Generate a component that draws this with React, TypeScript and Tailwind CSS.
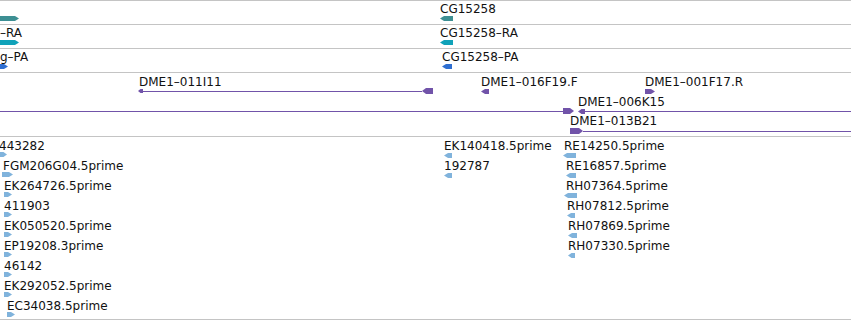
import React from "react";

type Dir = "l" | "r";

function ArrowShape({ w, h, dir, color, className = "" }: { w: number; h: number; dir: Dir; color: string; className?: string }) {
  const t = Math.min(4, w / 2);
  const pts =
    dir === "r"
      ? `0,0 ${w - t},0 ${w},${h / 2} ${w - t},${h} 0,${h}`
      : `${t},0 ${w},0 ${w},${h} ${t},${h} 0,${h / 2}`;
  return (
    <svg className={"block shrink-0 " + className} width={w} height={h} viewBox={`0 0 ${w} ${h}`}>
      <polygon points={pts} fill={color} />
    </svg>
  );
}

const PURPLE = "#7153a9";
const EST = "#80b3dc";
const label = "whitespace-nowrap text-[12px] leading-[14px] text-[#111]";

type Est = { t: string; lc: string; ac: string; w: number };

const leftEsts: Est[] = [
  { t: "443282", lc: "-ml-px", ac: "ml-0", w: 7 },
  { t: "FGM206G04.5prime", lc: "ml-[3px]", ac: "ml-[2px]", w: 11 },
  { t: "EK264726.5prime", lc: "ml-[4px]", ac: "ml-[4px]", w: 8 },
  { t: "411903", lc: "ml-[4px]", ac: "ml-[4px]", w: 8 },
  { t: "EK050520.5prime", lc: "ml-[4px]", ac: "ml-[4px]", w: 8 },
  { t: "EP19208.3prime", lc: "ml-[4px]", ac: "ml-[4px]", w: 8 },
  { t: "46142", lc: "ml-[4px]", ac: "ml-[4px]", w: 8 },
  { t: "EK292052.5prime", lc: "ml-[4px]", ac: "ml-[4px]", w: 8 },
  { t: "EC34038.5prime", lc: "ml-[7px]", ac: "ml-[7px]", w: 8 },
];

const midEsts: Est[] = [
  { t: "EK140418.5prime", lc: "ml-0", ac: "ml-0", w: 8 },
  { t: "192787", lc: "ml-0", ac: "ml-0", w: 8 },
];

const rightEsts: Est[] = [
  { t: "RE14250.5prime", lc: "ml-px", ac: "ml-0", w: 13 },
  { t: "RE16857.5prime", lc: "ml-[3px]", ac: "ml-[3px]", w: 10 },
  { t: "RH07364.5prime", lc: "ml-[3px]", ac: "ml-px", w: 13 },
  { t: "RH07812.5prime", lc: "ml-[4px]", ac: "ml-[4px]", w: 8 },
  { t: "RH07869.5prime", lc: "ml-[5px]", ac: "ml-[5px]", w: 9 },
  { t: "RH07330.5prime", lc: "ml-[5px]", ac: "ml-[5px]", w: 7 },
];

function EstColumn({ className, items, dir }: { className: string; items: Est[]; dir: Dir }) {
  return (
    <div className={"absolute top-0 flex flex-col " + className}>
      {items.map((e) => (
        <div key={e.t} className="flex h-[20px] flex-col items-start pt-[2px]">
          <div className={label + " " + e.lc}>{e.t}</div>
          <div className={e.ac + (dir === "r" ? " -mt-px" : "")}>
            <ArrowShape w={e.w} h={5} dir={dir} color={EST} />
          </div>
        </div>
      ))}
    </div>
  );
}

function Feature({ className, text, arrow }: { className: string; text?: string; arrow: React.ReactNode }) {
  return (
    <div className={"absolute flex flex-col items-start " + className}>
      {text && <div className={label}>{text}</div>}
      {arrow}
    </div>
  );
}

export default function App() {
  return (
    <div className="flex h-[320px] w-[851px] flex-col overflow-hidden bg-white font-['DejaVu_Sans','Liberation_Sans',sans-serif]">
      {/* gene rows */}
      <div className="relative h-[24px] shrink-0 border-t border-[#c4c4c4]">
        <Feature className="left-0 top-[15px]" arrow={<ArrowShape w={19} h={5} dir="r" color="#3d8f93" />} />
        <Feature
          className="left-[440px] top-px gap-0"
          text="CG15258"
          arrow={<ArrowShape w={13} h={5} dir="l" color="#3d8f93" />}
        />
      </div>
      <div className="relative h-[24px] shrink-0 border-t border-[#c4c4c4]">
        <Feature className="left-0 top-px" text="–RA" arrow={<ArrowShape w={19} h={5} dir="r" color="#10a2b9" />} />
        <Feature className="left-[440px] top-px" text="CG15258–RA" arrow={<ArrowShape w={13} h={5} dir="l" color="#10a2b9" />} />
      </div>
      <div className="relative h-[24px] shrink-0 border-t border-[#c4c4c4]">
        <Feature className="left-0 top-px" text="g–PA" arrow={<ArrowShape w={8} h={5} dir="r" color="#2f6fd1" />} />
        <Feature className="left-[442px] top-px" text="CG15258–PA" arrow={<ArrowShape w={10} h={5} dir="l" color="#2f6fd1" />} />
      </div>

      {/* clone track */}
      <div className="relative h-[64px] shrink-0 border-t border-[#c4c4c4]">
        <div className={"absolute left-[139px] top-[2px] " + label}>DME1–011I11</div>
        <div className="absolute left-[138px] top-[15px] flex w-[295px] items-center">
          <ArrowShape w={5} h={4} dir="l" color={PURPLE} />
          <div className="h-px flex-1 bg-[#7153a9]" />
          <ArrowShape w={11} h={6} dir="l" color={PURPLE} />
        </div>

        <Feature className="left-[481px] top-[2px] gap-[-1px]" text="DME1–016F19.F" arrow={<ArrowShape w={8} h={5} dir="l" color={PURPLE} />} />
        <Feature className="left-[645px] top-[2px]" text="DME1–001F17.R" arrow={<ArrowShape w={10} h={5} dir="r" color={PURPLE} />} />

        <div className={"absolute left-[578px] top-[22px] " + label}>DME1–006K15</div>
        <div className="absolute left-0 right-0 top-[35px] flex h-[6px] items-center">
          <div className="h-px w-[563px] bg-[#7153a9]" />
          <ArrowShape w={11} h={6} dir="r" color={PURPLE} />
          <div className="w-[4px]" />
          <ArrowShape w={7} h={5} dir="l" color={PURPLE} />
          <div className="h-px flex-1 bg-[#7153a9]" />
        </div>

        <div className={"absolute left-[570px] top-[41px] " + label}>DME1–013B21</div>
        <div className="absolute left-[570px] right-0 top-[55px] flex h-[6px] items-center">
          <ArrowShape w={13} h={6} dir="r" color={PURPLE} />
          <div className="h-px flex-1 bg-[#7153a9]" />
        </div>
      </div>

      {/* EST track */}
      <div className="relative h-[184px] shrink-0 border-y border-[#c4c4c4]">
        <EstColumn className="left-0" items={leftEsts} dir="r" />
        <EstColumn className="left-[444px]" items={midEsts} dir="l" />
        <EstColumn className="left-[563px]" items={rightEsts} dir="l" />
      </div>
    </div>
  );
}
